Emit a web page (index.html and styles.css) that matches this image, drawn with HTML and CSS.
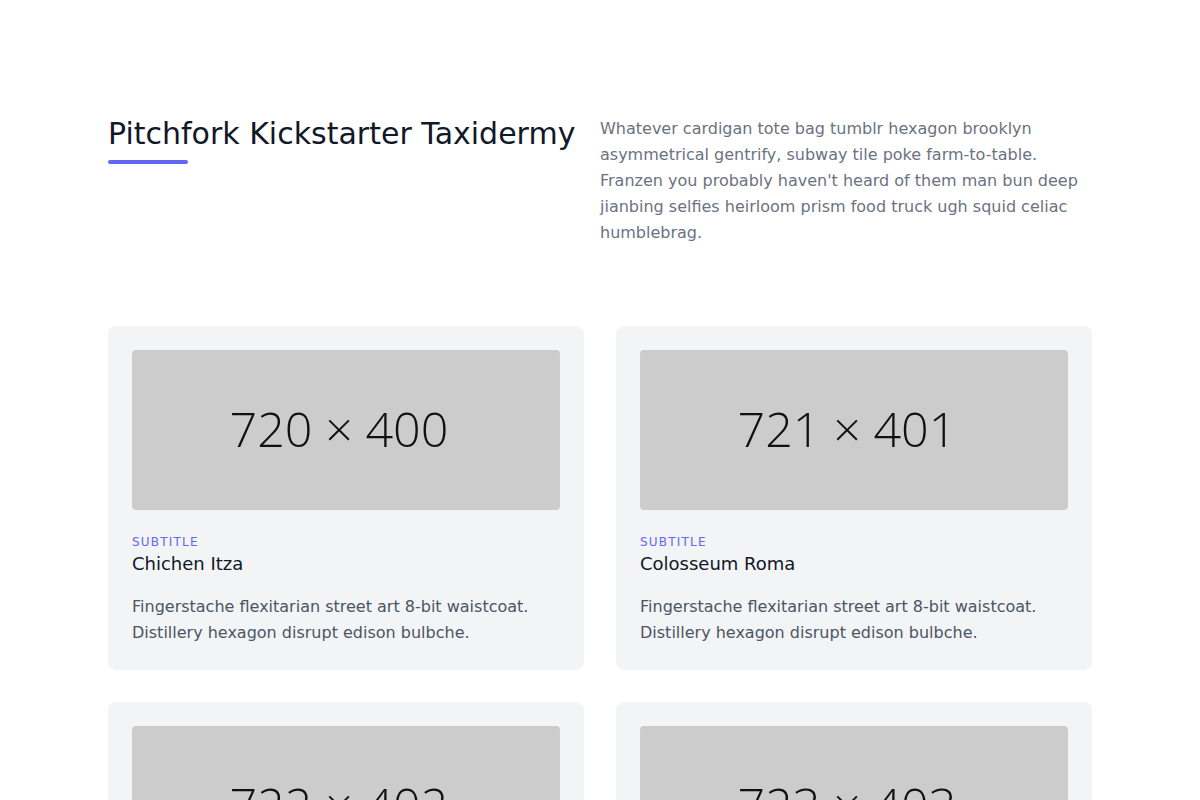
FILE: index.html
```
<!DOCTYPE html>
<html>
<head>
<meta charset="utf-8">
<link rel="stylesheet" href="styles.css">
</head>
<body>
<section class="section">
  <div class="container">
    <div class="header">
      <div class="header-left">
        <h1 class="title">Pitchfork Kickstarter Taxidermy</h1>
        <div class="bar"></div>
      </div>
      <p class="intro">Whatever cardigan tote bag tumblr hexagon brooklyn asymmetrical gentrify, subway tile poke farm-to-table. Franzen you probably haven't heard of them man bun deep jianbing selfies heirloom prism food truck ugh squid celiac humblebrag.</p>
    </div>
    <div class="grid">
      <div class="card">
        <div class="img"><span>720 × 400</span></div>
        <h3 class="subtitle">SUBTITLE</h3>
        <h2 class="name">Chichen Itza</h2>
        <p class="desc">Fingerstache flexitarian street art 8-bit waistcoat. Distillery hexagon disrupt edison bulbche.</p>
      </div>
      <div class="card">
        <div class="img"><span>721 × 401</span></div>
        <h3 class="subtitle">SUBTITLE</h3>
        <h2 class="name">Colosseum Roma</h2>
        <p class="desc">Fingerstache flexitarian street art 8-bit waistcoat. Distillery hexagon disrupt edison bulbche.</p>
      </div>
      <div class="card">
        <div class="img"><span>722 × 402</span></div>
        <h3 class="subtitle">SUBTITLE</h3>
        <h2 class="name">Great Pyramid of Giza</h2>
        <p class="desc">Fingerstache flexitarian street art 8-bit waistcoat. Distillery hexagon disrupt edison bulbche.</p>
      </div>
      <div class="card">
        <div class="img"><span>723 × 403</span></div>
        <h3 class="subtitle">SUBTITLE</h3>
        <h2 class="name">San Francisco</h2>
        <p class="desc">Fingerstache flexitarian street art 8-bit waistcoat. Distillery hexagon disrupt edison bulbche.</p>
      </div>
    </div>
  </div>
</section>
</body>
</html>
```
FILE: styles.css
```
* { box-sizing: border-box; }
html, body { margin: 0; padding: 0; background: #fff; }
body {
  font-family: "DejaVu Sans", sans-serif;
  color: #4b5563;
}
.section { padding: 116px 0 96px; }
.container {
  max-width: 1024px;
  margin: 0 auto;
  padding: 0 20px;
}
.header {
  display: flex;
  margin-bottom: 80px;
}
.header-left { width: 50%; }
.title {
  margin: 0 0 8px;
  font-size: 30px;
  line-height: 36px;
  font-weight: 500;
  color: #111827;
}
.bar {
  height: 4px;
  width: 80px;
  background: #6366f1;
  border-radius: 4px;
}
.intro {
  width: 50%;
  margin: 0;
  font-size: 16px;
  line-height: 26px;
  color: #6b7280;
}
.grid {
  display: grid;
  grid-template-columns: 1fr 1fr;
  gap: 32px;
}
.card {
  background: #f3f4f6;
  padding: 24px;
  border-radius: 8px;
}
.img {
  height: 160px;
  background: #cccccc;
  border-radius: 4px;
  margin-bottom: 24px;
  display: flex;
  align-items: center;
  justify-content: center;
  overflow: hidden;
}
.img span {
  font-family: "Open Sans", sans-serif;
  font-weight: 300;
  font-size: 48.5px;
  line-height: 1;
  margin-top: -3px;
  margin-right: 14px;
  color: #111;
}
.subtitle {
  margin: 0;
  font-size: 12px;
  line-height: 16px;
  letter-spacing: 0.1em;
  font-weight: 500;
  color: #6366f1;
}
.name {
  margin: 0 0 16px;
  font-size: 18px;
  line-height: 28px;
  font-weight: 500;
  color: #111827;
}
.desc {
  margin: 0;
  font-size: 16px;
  line-height: 26px;
}
```
